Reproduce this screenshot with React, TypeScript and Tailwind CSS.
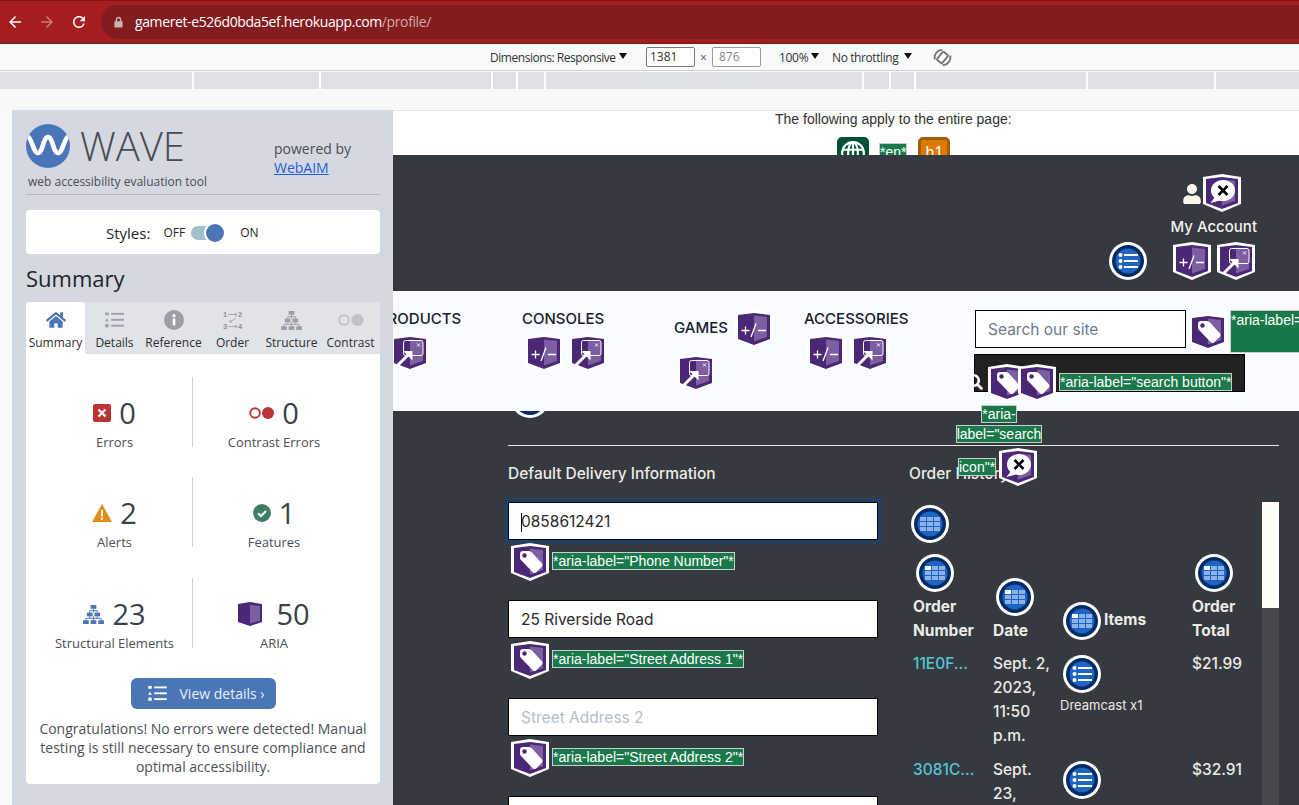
import React from 'react';
import { FaHome, FaSearch, FaUser } from 'react-icons/fa';

type ShieldKind = 'toggle' | 'link' | 'tag' | 'contrast';

const Shield: React.FC<{ kind: ShieldKind; className?: string }> = ({ kind, className }) => (
  <svg viewBox="0 0 38 38" className={`w-[38px] h-[38px] shrink-0 ${className ?? ''}`}>
    <polygon points="0,3 19,0 38,3 38,30 19,38 0,30" fill="#fff" />
    <polygon points="3,5 19,3 35,5 35,29 19,35 3,29" fill="#4b2876" />
    <polygon points="19,5.5 32,7 32,27 19,31.5" fill="#7c5ea3" />
    {kind === 'toggle' && (
      <g stroke="#fff" strokeWidth="1.3" fill="none">
        <path d="M6.5 20.5h8M10.5 16.5v8M16 27l5-13.5M23 20.5h8" />
      </g>
    )}
    {kind === 'link' && (
      <g>
        <rect x="12.5" y="6.5" width="19.5" height="15" rx="2" fill="none" stroke="#fff" strokeWidth="1" />
        <path d="M26 9.5l3 3M29 9.5l-3 3" stroke="#fff" strokeWidth="0.9" />
        <path d="M7 31L17 21" stroke="#fff" strokeWidth="3" />
        <polygon points="12,17 21.5,17 21.5,26.5" fill="#fff" />
      </g>
    )}
    {kind === 'tag' && (
      <g>
        <path
          d="M9 11q0-3 3-3h6q1.5 0 3 1.5l10 11q1 1.5 0 3l-6 6q-1.5 1-3 0l-11-11.5q-2-1.5-2-3z"
          fill="#fff"
        />
        <circle cx="13.5" cy="12.5" r="2.2" fill="#4b2876" />
      </g>
    )}
    {kind === 'contrast' && (
      <g>
        <ellipse cx="20" cy="16.5" rx="12" ry="10.5" fill="#fff" />
        <polygon points="12,23 7.5,29 17,26.5" fill="#fff" />
        <path d="M15.5 12l9 9M24.5 12l-9 9" stroke="#000" strokeWidth="2.6" />
      </g>
    )}
  </svg>
);

const RoundIcon: React.FC<{ kind: 'list' | 'table' | 'th'; className?: string }> = ({ kind, className }) => (
  <svg viewBox="0 0 38 38" className={`w-[38px] h-[38px] shrink-0 ${className ?? ''}`}>
    <circle cx="19" cy="19" r="19" fill="#fff" />
    <circle cx="19" cy="19" r="16" fill="#002b66" />
    <circle cx="19" cy="19" r="12.5" fill="#1e64c4" />
    {kind === 'list' ? (
      <g fill="#fff">
        <circle cx="11.5" cy="13" r="2" />
        <circle cx="11.5" cy="19" r="2" />
        <circle cx="11.5" cy="25" r="2" />
        <rect x="15" y="12" width="14" height="2" />
        <rect x="15" y="18" width="14" height="2" />
        <rect x="15" y="24" width="14" height="2" />
      </g>
    ) : (
      <g fill="#8db2e6">
        <rect x="9" y="12" width="6" height="4" fill={kind === 'th' ? '#fff' : '#8db2e6'} />
        <rect x="16" y="12" width="6" height="4" />
        <rect x="23" y="12" width="6" height="4" />
        <rect x="9" y="17" width="6" height="4" />
        <rect x="16" y="17" width="6" height="4" />
        <rect x="23" y="17" width="6" height="4" />
        <rect x="9" y="22" width="6" height="4" />
        <rect x="16" y="22" width="6" height="4" />
        <rect x="23" y="22" width="6" height="4" />
      </g>
    )}
  </svg>
);

const AriaLabel: React.FC<{ children: React.ReactNode; className?: string }> = ({ children, className }) => (
  <span
    className={`inline-block bg-[#1a794a] border border-[#c8cfc9] text-white text-[14px] leading-[16px] font-['Liberation_Sans',sans-serif] whitespace-nowrap ${className ?? ''}`}
  >
    {children}
  </span>
);

const StructureGlyph: React.FC<{ className: string; color: string }> = ({ className, color }) => (
  <svg viewBox="0 0 22 20" className={className} fill={color}>
    <rect x="8" y="0" width="6" height="4" />
    <rect x="4" y="8" width="6" height="4" />
    <rect x="12" y="8" width="6" height="4" />
    <rect x="0" y="16" width="6" height="4" />
    <rect x="8" y="16" width="6" height="4" />
    <rect x="16" y="16" width="6" height="4" />
    <path d="M11 4v4M7 8V6h8v2M3 16v-2h16v2M11 12v4M7 12v2M15 12v2" stroke={color} fill="none" strokeWidth="1" />
  </svg>
);

const ListGlyph: React.FC<{ className: string; color: string }> = ({ className, color }) => (
  <svg viewBox="0 0 20 16" className={className} fill={color}>
    <rect x="0" y="0" width="4" height="3" rx="0.5" />
    <polygon points="2,6.2 4,9.2 0,9.2" />
    <circle cx="2" cy="14" r="2" />
    <rect x="6.5" y="0.5" width="13.5" height="2" />
    <rect x="6.5" y="6.8" width="13.5" height="2" />
    <rect x="6.5" y="13" width="13.5" height="2" />
  </svg>
);

const DropArrow: React.FC = () => (
  <svg viewBox="0 0 8 6" className="ml-[3px] w-[8px] h-[6px] shrink-0 -mt-[2px]" fill="#111">
    <polygon points="0,0 8,0 4,6" />
  </svg>
);

const tabs = [
  {
    label: 'Summary',
    icon: <FaHome className="w-[20px] h-[20px] text-[#4a76b8]" />,
  },
  { label: 'Details', icon: <ListGlyph className="w-[19px] h-[16px]" color="#9c9fa5" /> },
  {
    label: 'Reference',
    icon: (
      <svg viewBox="0 0 20 20" className="w-[20px] h-[20px]">
        <circle cx="10" cy="10" r="10" fill="#9c9fa5" />
        <rect x="8.7" y="8.5" width="2.6" height="7" fill="#fff" />
        <circle cx="10" cy="5.7" r="1.6" fill="#fff" />
      </svg>
    ),
  },
  {
    label: 'Order',
    icon: (
      <svg viewBox="0 0 20 20" className="w-[20px] h-[20px]">
        <g fill="#8d9096" fontSize="7.5" fontWeight="700" fontFamily="'Liberation Sans', sans-serif">
          <text x="0" y="7">1</text>
          <text x="15" y="7">2</text>
          <text x="0" y="19">3</text>
          <text x="15" y="19">4</text>
        </g>
        <path d="M5 4.5h9M12 3l2 1.5-2 1.5M5 16.5h9M12 15l2 1.5-2 1.5M13 8l-6 4M7 10v2h2" stroke="#8d9096" strokeWidth="0.7" fill="none" />
      </svg>
    ),
  },
  { label: 'Structure', icon: <StructureGlyph className="w-[21px] h-[19px]" color="#9c9fa5" /> },
  {
    label: 'Contrast',
    icon: (
      <svg viewBox="0 0 26 12" className="w-[26px] h-[12px]">
        <circle cx="6" cy="6" r="4.8" fill="none" stroke="#bfc2c7" strokeWidth="1.8" />
        <circle cx="19.5" cy="6" r="6" fill="#bfc2c7" />
      </svg>
    ),
  },
];

const stats = [
  {
    label: 'Errors',
    value: '0',
    icon: (
      <svg viewBox="0 0 18 18" className="w-[18px] h-[18px]">
        <rect width="18" height="18" rx="2" fill="#ba3435" />
        <path d="M5.5 5.5l7 7M12.5 5.5l-7 7" stroke="#fff" strokeWidth="2.2" />
      </svg>
    ),
  },
  {
    label: 'Contrast Errors',
    value: '0',
    icon: (
      <svg viewBox="0 0 25 12" className="w-[25px] h-[12px]">
        <circle cx="6" cy="6" r="4.8" fill="none" stroke="#ba3435" strokeWidth="1.9" />
        <circle cx="19" cy="6" r="6" fill="#ba3435" />
      </svg>
    ),
  },
  {
    label: 'Alerts',
    value: '2',
    icon: (
      <svg viewBox="0 0 20 18" className="w-[20px] h-[18px]">
        <polygon points="10,0 20,18 0,18" fill="#e58e17" />
        <rect x="9" y="6" width="2" height="6.5" fill="#fff" />
        <rect x="9" y="13.8" width="2" height="2" fill="#fff" />
      </svg>
    ),
  },
  {
    label: 'Features',
    value: '1',
    icon: (
      <svg viewBox="0 0 18 18" className="w-[18px] h-[18px]">
        <circle cx="9" cy="9" r="9" fill="#3f8063" />
        <path d="M5 9.2l3 2.8 5-5" stroke="#fff" strokeWidth="2" fill="none" />
      </svg>
    ),
  },
  {
    label: 'Structural Elements',
    value: '23',
    icon: <StructureGlyph className="w-[21px] h-[19px]" color="#4a76b8" />,
  },
  {
    label: 'ARIA',
    value: '50',
    icon: (
      <svg viewBox="0 0 24 24" className="w-[24px] h-[24px] mr-[6px]">
        <polygon points="0,2 12,0 24,2 24,20 12,24 0,20" fill="#4b2876" />
        <polygon points="12,3 22,4 22,18.5 12,21.5" fill="#7c5ea3" />
      </svg>
    ),
  },
];

const WavePanel: React.FC = () => (
  <aside className="w-[381px] shrink-0 bg-[#d4d8e0] pl-[14px] pr-[13px] pt-[13px] font-['Open_Sans',sans-serif]">
    <div className="flex h-[72px] border-b border-[#b4b8be]">
      <div className="w-[248px]">
        <div className="flex items-center h-[46px]">
          <svg viewBox="0 0 44 44" className="w-[44px] h-[44px] mr-[10px]">
            <defs>
              <clipPath id="wave-clip">
                <circle cx="22" cy="22" r="22" />
              </clipPath>
            </defs>
            <circle cx="22" cy="22" r="22" fill="#4a76b8" />
            <path
              d="M1 12C6 13 7 29 12 29C17 29 17 13 22 13C27 13 27 29 32 29C37 29 38 13 43 12"
              stroke="#fff"
              strokeWidth="4.6"
              fill="none"
              clipPath="url(#wave-clip)"
            />
          </svg>
          <span className="text-[40px] leading-[46px] font-light text-[#494b4f]">WAVE</span>
        </div>
        <div className="text-[12px] leading-[16px] text-[#4a4d52] pl-[2px] mt-[5px]">web accessibility evaluation tool</div>
      </div>
      <div className="text-[14px] leading-[19px] text-[#4a4d52] pt-[16px]">
        <div>powered by</div>
        <a className="text-[#1f5fd6] underline">WebAIM</a>
      </div>
    </div>

    <div className="mt-[15px] h-[44px] bg-white rounded-[4px] flex items-center pl-[80px] pt-[2px] text-[#22252a]">
      <span className="text-[15px]">Styles:</span>
      <span className="text-[12px] ml-[13px]">OFF</span>
      <span className="relative ml-[6px] w-[32px] h-[14px] rounded-full bg-[#a0c0cc]">
        <span className="absolute right-[-3px] top-[-4px] w-[22px] h-[22px] rounded-full bg-[#4a76b8] border-2 border-white" />
      </span>
      <span className="text-[12px] ml-[17px]">ON</span>
    </div>

    <h2 className="mt-[9px] text-[22px] leading-[30px] text-[#22252a]">Summary</h2>

    <div className="mt-[9px] rounded-[4px] overflow-hidden bg-white">
      <div className="grid grid-cols-6 h-[52px] bg-[#e0e3e8]">
        {tabs.map((tab, index) => (
          <div
            key={tab.label}
            className={`flex flex-col items-center pt-[6px] ${index === 0 ? 'bg-white rounded-t-[4px]' : ''}`}
          >
            <div className="h-[24px] flex items-center justify-center">{tab.icon}</div>
            <div className="mt-[3px] text-[12px] leading-[16px] text-[#2b2e33] whitespace-nowrap">{tab.label}</div>
          </div>
        ))}
      </div>

      <div className="pl-[11px] pt-[23px] grid grid-cols-[156px_162px] gap-y-[30px]">
        {stats.map((stat, index) => (
          <div
            key={stat.label}
            className={`h-[70px] flex flex-col items-center ${index % 2 === 0 ? 'border-r border-[#cfd2d5]' : ''} ${
              index >= 4 ? 'mt-[1px]' : ''
            }`}
          >
            <div className="flex items-center gap-[8px] h-[38px] shrink-0 mt-[17px]">
              {stat.icon}
              <span className="text-[29px] leading-[38px] text-[#3a3f48]">{stat.value}</span>
            </div>
            <div className="text-[13px] leading-[18px] shrink-0 text-[#494e58] mt-[1px] whitespace-nowrap">{stat.label}</div>
          </div>
        ))}
      </div>

      <div className="flex justify-center mt-[30px]">
        <div className="w-[145px] h-[31px] rounded-[6px] bg-[#4a76b6] flex items-center pl-[17px] text-white">
          <ListGlyph className="w-[19px] h-[15px]" color="#fff" />
          <span className="text-[14px] ml-[13px] text-[#e8eef8]">View details ›</span>
        </div>
      </div>

      <p className="mt-[10px] pb-[8px] px-[10px] text-center text-[14px] leading-[19px] text-[#4b505a]">
        Congratulations! No errors were detected! Manual testing is still necessary to ensure compliance and optimal
        accessibility.
      </p>
    </div>
  </aside>
);

const Field: React.FC<{ value?: string; placeholder?: string; label: string; focused?: boolean }> = ({
  value,
  placeholder,
  label,
  focused,
}) => (
  <div className="mb-[19px]">
    <div
      className={`h-[38px] bg-white border border-black flex items-center pl-[12px] pt-[2px] text-[15.5px] ${
        value ? 'text-[#2a2a2a]' : 'text-[#b4bfcc]'
      } ${focused ? 'outline-[3px] outline-solid outline-[#1f4068]' : ''}`}
    >
      {focused && <span className="w-px h-[19px] bg-black -mr-px" />}
      {value ?? placeholder}
    </div>
    <div className="flex items-center mt-[3px] ml-[3px] gap-[3px]">
      <Shield kind="tag" />
      <AriaLabel className="-mt-[2px]">{label}</AriaLabel>
    </div>
  </div>
);

const SiteNav: React.FC = () => (
  <nav className="relative z-10 h-[120px] bg-[#f8fbff] flex overflow-hidden text-[#17202c] font-medium text-[15px] leading-[24px]">
    <div className="w-[83px] shrink-0 -ml-[15px] pt-[16px]">
      <div className="whitespace-nowrap">PRODUCTS</div>
      <Shield kind="link" className="mt-[3px] ml-[13px]" />
    </div>
    <div className="w-[82px] shrink-0 ml-[61px] pt-[16px]">
      <div className="whitespace-nowrap">CONSOLES</div>
      <div className="flex gap-[6px] mt-[3px] ml-[3px]">
        <Shield kind="toggle" />
        <Shield kind="link" />
      </div>
    </div>
    <div className="w-[98px] shrink-0 ml-[70px] pt-[19px]">
      <div className="flex items-center gap-[7px]">
        <span className="-mt-[2px]">GAMES</span>
        <Shield kind="toggle" />
      </div>
      <Shield kind="link" className="mt-[6px] ml-[3px]" />
    </div>
    <div className="w-[106px] shrink-0 ml-[32px] pt-[16px]">
      <div className="whitespace-nowrap">ACCESSORIES</div>
      <div className="flex gap-[6px] mt-[3px] ml-[3px]">
        <Shield kind="toggle" />
        <Shield kind="link" />
      </div>
    </div>
    <div className="w-[345px] shrink-0 ml-[65px] pt-[19px]">
      <div className="flex items-start">
        <div className="w-[211px] shrink-0 h-[38px] bg-white border border-black flex items-center pl-[12px] pt-[2px] text-[15.5px] font-normal text-[#6d7c8c]">
          Search our site
        </div>
        <Shield kind="tag" className="ml-[3px] mt-[3px]" />
        <AriaLabel className="ml-[3px] w-[90px] h-[43px] pt-[1px]">*aria-label="</AriaLabel>
      </div>
      <div className="relative -ml-[1px] mt-[1px] w-[271px] h-[38px] bg-[#222] border border-black pt-[9px] pl-[13px] flex items-start">
        <FaSearch className="absolute left-[-8px] top-[19px] w-[16px] h-[16px] text-white" />
        <Shield kind="tag" />
        <Shield kind="tag" className="-ml-[8px]" />
        <AriaLabel className="ml-[3px] mt-[9px]">*aria-label="search button"*</AriaLabel>
      </div>
    </div>
  </nav>
);

const orders = [
  { id: '11E0F...', date: ['Sept. 2,', '2023,', '11:50', 'p.m.'], item: 'Dreamcast x1', total: '$21.99' },
  { id: '3081C...', date: ['Sept.', '23,'], item: '', total: '$32.91' },
];

const OrderTable: React.FC = () => (
  <div className="flex w-[370px]">
    <div className="w-[353px] shrink-0 pt-[3px]">
      <RoundIcon kind="table" className="ml-[2px]" />
      <div className="grid grid-cols-[80px_67px_132px_70px] ml-[4px] mt-[11px] text-[15.5px] leading-[24px] text-[#ecebe4]">
        <div className="self-end font-bold">
          <RoundIcon kind="th" className="ml-[3px] mb-[3px]" />
          Order
          <br />
          Number
        </div>
        <div className="self-end font-bold">
          <RoundIcon kind="th" className="ml-[3px] mb-[3px]" />
          Date
        </div>
        <div className="self-end flex items-center pl-[3px] font-bold mb-[3px]">
          <RoundIcon kind="th" />
          <span className="ml-[3px] -mt-[2px]">Items</span>
        </div>
        <div className="self-end font-bold">
          <RoundIcon kind="th" className="ml-[3px] mb-[3px]" />
          Order
          <br />
          Total
        </div>
        {orders.map((order) => (
          <React.Fragment key={order.id}>
            <div className="pt-[9px] text-[#56c5d8] font-medium">{order.id}</div>
            <div className="pt-[9px] pb-[1px] font-medium">
              {order.date.map((line) => (
                <div key={line}>{line}</div>
              ))}
            </div>
            <div className="pt-[12px] pl-[3px]">
              <RoundIcon kind="list" />
              {order.item && (
                <div className="text-[13px] leading-[18px] -ml-[3px] mt-[3px] whitespace-nowrap">{order.item}</div>
              )}
            </div>
            <div className="pt-[9px] font-medium">{order.total}</div>
          </React.Fragment>
        ))}
      </div>
    </div>
    <div className="w-[17px] h-[303px] bg-[#45494d]">
      <div className="h-[106px] bg-[#fdfdf5]" />
    </div>
  </div>
);

const SiteMain: React.FC = () => (
  <main className="relative flex-1 min-w-0 overflow-hidden font-['Inter',sans-serif]">
    <div className="h-[45px] bg-[#fdfdfd] border-t border-[#e4e6e6] overflow-hidden font-['Liberation_Sans',sans-serif]">
      <div className="pl-[382px] text-[14px] leading-[16px] text-[#333]">The following apply to the entire page:</div>
      <div className="flex items-start pl-[444px] mt-[10px]">
        <div className="w-[32px] h-[32px] rounded-[5px] bg-[#005233] flex items-center justify-center">
          <svg viewBox="0 0 24 24" className="w-[26px] h-[26px]" fill="none" stroke="#fff" strokeWidth="2">
            <circle cx="12" cy="12" r="10" />
            <ellipse cx="12" cy="12" rx="4.5" ry="10" />
            <path d="M2.5 9h19M2.5 15h19M12 2v20" />
          </svg>
        </div>
        <AriaLabel className="ml-[10px] mt-[6px] leading-[17px]">*en*</AriaLabel>
        <div className="ml-[11px] w-[32px] h-[32px] rounded-[5px] bg-[#da7b00] border-[3px] border-[#a35c00] text-white text-[16px] flex items-center justify-center">
          h1
        </div>
      </div>
    </div>

    <header className="h-[136px] bg-[#353940] flex justify-end pr-[42px]">
      <div className="flex flex-col items-end text-[#f2f3ee] pt-[19px]">
        <div className="flex items-center mr-[16px]">
          <FaUser className="w-[18px] h-[20px] text-[#fbf6ea] mr-[2px] mt-[2px]" />
          <Shield kind="contrast" />
        </div>
        <div className="mt-[3px] text-[15px] leading-[24px] font-medium whitespace-nowrap">My Account</div>
        <div className="flex items-center mt-[3px] mr-[2px]">
          <RoundIcon kind="list" className="mr-[26px]" />
          <Shield kind="toggle" />
          <Shield kind="link" className="ml-[6px]" />
        </div>
      </div>
    </header>

    <SiteNav />

    <div className="flow-root h-[394px] bg-[#353940] pl-[115px] pr-[20px] text-[#ecebe4]">
      <RoundIcon kind="list" className="-mt-[31px] ml-[3px] relative" />
      <div className="mt-[27px] border-t border-[#e6e6e6]" />
      <div className="grid grid-cols-[370px_370px] gap-x-[31px] mt-[16px]">
        <div>
          <h3 className="text-[15.5px] leading-[24px] font-medium">Default Delivery Information</h3>
          <div className="mt-[16px]">
            <Field value="0858612421" label={'*aria-label="Phone Number"*'} focused />
            <Field value="25 Riverside Road" label={'*aria-label="Street Address 1"*'} />
            <Field placeholder="Street Address 2" label={'*aria-label="Street Address 2"*'} />
            <div className="h-[38px] bg-white border border-black" />
          </div>
        </div>
        <div>
          <h3 className="text-[15.5px] leading-[24px] font-medium">Order History</h3>
          <div className="mt-[16px]">
            <OrderTable />
          </div>
        </div>
      </div>
    </div>

    {/* search icon annotation spills over the page below the nav */}
    <div className="absolute left-[564px] top-[295px] z-20 w-[84px] flex flex-col items-center leading-[20px]">
      <AriaLabel>*aria-</AriaLabel>
      <AriaLabel className="mt-[2px]">label="search</AriaLabel>
    </div>
    <div className="absolute left-[565px] top-[338px] z-20 flex items-center">
      <AriaLabel>icon"*</AriaLabel>
      <Shield kind="contrast" className="ml-[3px]" />
    </div>
  </main>
);

const DevToolbar: React.FC = () => (
  <div className="h-[27px] bg-[#f8fafa] border-b border-[#cdd0d8] flex items-center text-[12px] text-[#333] font-['Open_Sans',sans-serif] whitespace-nowrap">
    <span className="ml-[490px] w-[126px] mt-[2px] tracking-[-0.45px]">Dimensions: Responsive</span>
    <DropArrow />
    <span className="ml-[19px] w-[49px] h-[20px] bg-white border border-[#777] rounded-[2px] pl-[3px] leading-[18px]">1381</span>
    <span className="w-[17px] mt-[2px] text-center text-[#555]">×</span>
    <span className="w-[49px] h-[20px] bg-white border border-[#999] rounded-[2px] pl-[6px] leading-[18px] text-[#888]">876</span>
    <span className="ml-[18px] w-[29px] mt-[2px] tracking-[-0.3px]">100%</span>
    <DropArrow />
    <span className="ml-[13px] w-[69px] mt-[2px] tracking-[-0.4px]">No throttling</span>
    <DropArrow />
    <svg viewBox="0 0 20 20" className="ml-[21px] w-[19px] h-[19px]" fill="none" stroke="#777" strokeWidth="2">
      <rect x="6.5" y="4.5" width="7" height="11" rx="1" transform="rotate(40 10 10)" />
      <path d="M2 12a8 8 0 0 1 8-10M18 8a8 8 0 0 1-8 10" />
    </svg>
  </div>
);

const App: React.FC = () => (
  <div className="w-[1299px] h-[805px] overflow-hidden flex flex-col bg-[#f8f9f9]">
    <div className="h-[44px] shrink-0 bg-[#a51d1f] border-t border-[#7e1517] border-b-2 border-b-[#8c1a1c] flex items-center">
      <svg viewBox="0 0 24 24" className="ml-[6px] w-[18px] h-[18px]" fill="#fff">
        <path d="M20 11H7.83l5.59-5.59L12 4l-8 8 8 8 1.41-1.41L7.83 13H20v-2z" />
      </svg>
      <svg viewBox="0 0 24 24" className="ml-[14px] w-[18px] h-[18px]" fill="#cf7a7b">
        <path d="M4 11h12.17l-5.59-5.59L12 4l8 8-8 8-1.41-1.41L16.17 13H4v-2z" />
      </svg>
      <svg viewBox="0 0 24 24" className="ml-[14px] w-[18px] h-[18px]" fill="#fff">
        <path d="M17.65 6.35C16.2 4.9 14.21 4 12 4c-4.42 0-7.99 3.58-7.99 8s3.57 8 7.99 8c3.73 0 6.84-2.55 7.73-6h-2.08c-.82 2.33-3.04 4-5.65 4-3.31 0-6-2.69-6-6s2.69-6 6-6c1.66 0 3.14.69 4.22 1.78L13 11h7V4l-2.35 2.35z" />
      </svg>
      <div className="ml-[13px] flex-1 h-[34px] rounded-l-full bg-[#821c1e] flex items-center pl-[12px] text-[14px] font-['Open_Sans',sans-serif] tracking-[-0.39px]">
        <svg viewBox="0 0 16 16" className="w-[11px] h-[12px]" fill="#c9b4b4">
          <path d="M13 7h-1V4.5a4 4 0 0 0-8 0V7H3a1 1 0 0 0-1 1v7a1 1 0 0 0 1 1h10a1 1 0 0 0 1-1V8a1 1 0 0 0-1-1zM6 4.5a2 2 0 0 1 4 0V7H6V4.5z" />
        </svg>
        <span className="ml-[11px] text-white">gameret-e526d0bda5ef.herokuapp.com</span>
        <span className="text-[#d5a9a9]">/profile/</span>
      </div>
    </div>

    <DevToolbar />

    <div className="h-[17px] mt-[1px] shrink-0 grid grid-cols-[194px_127px_172px_25px_28px_318px_27px_25px_172px_128px_84px]">
      <div className="bg-[#dee1e6] border-r-2 border-white" />
      <div className="bg-[#dee1e6] border-r-2 border-white" />
      <div className="bg-[#dee1e6] border-r-2 border-white" />
      <div className="bg-[#dee1e6] border-r-2 border-white" />
      <div className="bg-[#dee1e6] border-r-2 border-white" />
      <div className="bg-[#dee1e6] border-r-2 border-white" />
      <div className="bg-[#dee1e6] border-r-2 border-white" />
      <div className="bg-[#dee1e6] border-r-2 border-white" />
      <div className="bg-[#dee1e6] border-r-2 border-white" />
      <div className="bg-[#dee1e6] border-r-2 border-white" />
      <div className="bg-[#dee1e6]" />
    </div>

    <div className="h-[21px] shrink-0 bg-[#f7f9f9]" />

    <div className="flex-1 min-h-0 flex pl-[12px]">
      <WavePanel />
      <SiteMain />
    </div>
  </div>
);

export default App;
